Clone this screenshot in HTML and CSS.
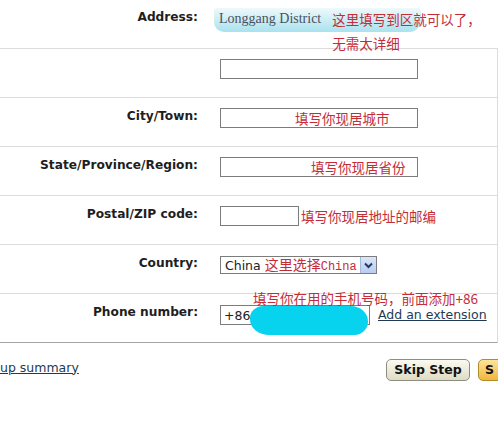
FILE: index.html
```html
<!DOCTYPE html>
<html lang="zh">
<head>
<meta charset="UTF-8">
<title>Address</title>
<link rel="stylesheet" href="styles.css">
</head>
<body>
<div class="frame">
  <div class="row first">
    <label class="lbl">Address:</label>
    <div class="field addr">
      <span class="hl"></span>
      <span class="addr-val">Longgang District</span>
      <span class="note">这里填写到区就可以了，<br>无需太详细</span>
    </div>
  </div>

  <div class="row">
    <label class="lbl"></label>
    <div class="field"><div class="box"></div></div>
  </div>

  <div class="row">
    <label class="lbl">City/Town:</label>
    <div class="field"><div class="box"><span class="note in-city">填写你现居城市</span></div></div>
  </div>

  <div class="row">
    <label class="lbl">State/Province/Region:</label>
    <div class="field"><div class="box"><span class="note in-state">填写你现居省份</span></div></div>
  </div>

  <div class="row">
    <label class="lbl">Postal/ZIP code:</label>
    <div class="field inline"><div class="box zip"></div><span class="note">填写你现居地址的邮编</span></div>
  </div>

  <div class="row">
    <label class="lbl">Country:</label>
    <div class="field">
      <div class="select">
        <span class="val">China <span class="note">这里选择<span class="mono">China</span></span></span>
        <span class="arrow"><svg width="9" height="7" viewBox="0 0 9 7"><path d="M1 1.5 4.5 5 8 1.5" fill="none" stroke="#22386a" stroke-width="2"/></svg></span>
      </div>
    </div>
  </div>

  <div class="row last">
    <label class="lbl">Phone number:</label>
    <div class="field inline phone">
      <span class="note over">填写你在用的手机号码，前面添加+86</span>
      <div class="box tel"><span class="val">+86</span></div>
      <span class="blob"></span>
      <a class="link" href="#">Add an extension</a>
    </div>
  </div>

  <div class="footer">
    <a class="link" href="#">up summary</a>
    <div class="buttons">
      <button class="btn skip">Skip Step</button>
      <button class="btn go">S</button>
    </div>
  </div>
</div>
</body>
</html>
```

FILE: styles.css
```css
*{box-sizing:border-box;margin:0;padding:0}
body{background:#fff;font-family:"DejaVu Sans",Verdana,sans-serif;color:#222}
.frame{width:498px;overflow:hidden;height:392px}

.row{display:grid;grid-template-columns:198px 1fr;column-gap:22px;height:49px;padding-top:10px;border-top:1px solid #dcdcdc;border-right:1px solid #dcdcdc}
.row.first{border-top:none;border-right:none;height:48px;padding-top:9px}
.row.last{border-bottom:1px solid #a4a4a4;height:50px}

.lbl{text-align:right;font-weight:bold;font-size:12.2px;line-height:16px;color:#1e1e1e;white-space:nowrap}
.field{position:relative;font-size:12.5px}
.field.inline{display:flex;align-items:flex-start}

.note{font-family:"Noto Sans CJK SC",sans-serif;color:#c42c38;font-size:13.5px;line-height:20px}
.box{width:198px;height:20px;border:1px solid #7c7c7c;background:#fff;display:flex;align-items:center}
.box .note{line-height:18px}
.in-city{padding-left:74px}
.in-state{padding-left:90px}
.box.zip{width:79px;margin-right:2px}

.addr{display:flex;align-items:flex-start}
.addr-val{font-family:"Liberation Serif",serif;font-size:14px;line-height:20px;color:#4c5060;padding:0 11px 0 0;margin-left:-1px;position:relative;z-index:1}
.addr .note{line-height:24px;margin-top:-2px;position:relative;z-index:1}
.hl{position:absolute;left:-6px;top:-1px;width:207px;height:24px;border-radius:3px 4px 12px 10px;background:linear-gradient(#eef9fb,#a9e2ee)}

.select{width:157px;height:18px;border:1px solid #7c7c7c;display:flex;align-items:center;justify-content:space-between;margin-top:1px}
.select .val{padding-left:4px;line-height:16px;white-space:nowrap}
.select .note{font-size:14px;line-height:16px}
.mono{font-family:"Liberation Mono",monospace;font-size:12px}
.arrow{width:16px;height:16px;background:linear-gradient(#dbe6f7,#b9cdef);border-left:1px solid #a3b7dc;display:flex;align-items:center;justify-content:center}

.phone .note.over{position:absolute;left:33px;top:-16px;z-index:2;white-space:nowrap}
.box.tel{width:150px;margin-top:1px}
.box.tel .val{padding-left:3px}
.blob{position:absolute;left:30px;top:2px;width:118px;height:29px;background:#08d3ef;border-radius:14px 18px 14px 20px / 12px 16px 14px 16px;z-index:3}
.link{color:#1f3a55;text-decoration:underline;font-size:12.5px}
.phone .link{margin-left:8px;line-height:20px;margin-top:1px}

.footer{width:560px;height:49px;display:flex;align-items:center;justify-content:space-between;padding-top:4px}
.footer .link{line-height:16px;margin-top:-4px}
.buttons{display:flex;gap:8px}
.btn{font-family:"DejaVu Sans",sans-serif;font-weight:bold;font-size:12.5px;height:22px;border-radius:5px;cursor:pointer}
.btn.skip{width:84px;border:1px solid #8e8e80;background:linear-gradient(#fbfaf0,#dedbc4);color:#111}
.btn.go{width:82px;border:1px solid #b08c2c;background:linear-gradient(#fde59a,#f1b63c);color:#111;text-align:left;padding-left:6px}
```
